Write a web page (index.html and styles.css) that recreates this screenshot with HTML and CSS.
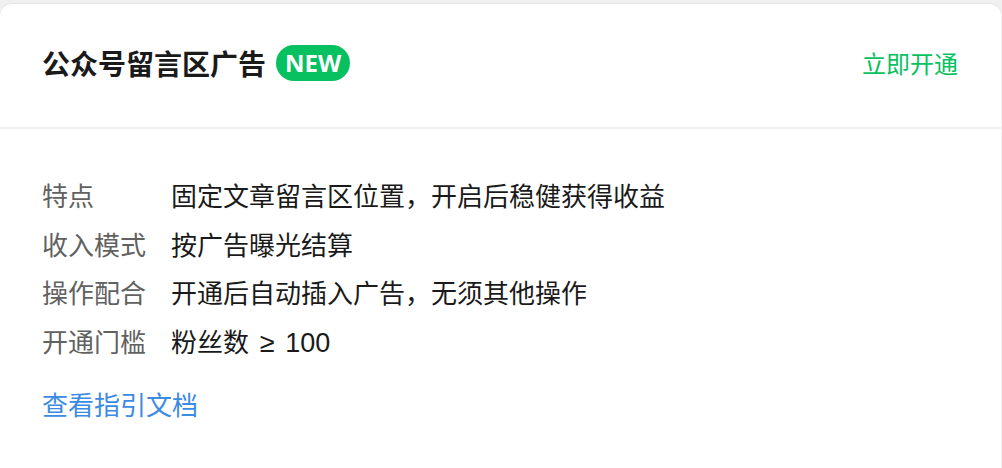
FILE: index.html
```html
<!DOCTYPE html>
<html lang="zh-CN">
<head>
<meta charset="utf-8">
<link rel="stylesheet" href="styles.css">
</head>
<body>
<div class="card">
  <div class="card-header">
    <div class="title-wrap">
      <span class="title">公众号留言区广告</span>
      <span class="badge">NEW</span>
    </div>
    <a class="action">立即开通</a>
  </div>
  <div class="card-body">
    <div class="info">
      <div class="label">特点</div><div class="value">固定文章留言区位置，开启后稳健获得收益</div>
      <div class="label">收入模式</div><div class="value">按广告曝光结算</div>
      <div class="label">操作配合</div><div class="value">开通后自动插入广告，无须其他操作</div>
      <div class="label">开通门槛</div><div class="value">粉丝数 <span class="latin">≥ 100</span></div>
    </div>
    <a class="doc-link">查看指引文档</a>
  </div>
</div>
</body>
</html>
```
FILE: styles.css
```css
html, body {
  margin: 0;
  padding: 0;
}
body {
  background: #f0f0f0;
  font-family: "Noto Sans CJK SC", "Noto Sans", sans-serif;
  height: 468px;
  overflow: hidden;
}
.card {
  margin-top: 4px;
  width: 1001px;
  height: 464px;
  background: #ffffff;
  border-radius: 12px 12px 0 0;
  box-shadow: 0 -1px 0 #e6e6e6;
}
.card-header {
  height: 125px;
  box-sizing: border-box;
  padding: 0 43px 0 42px;
  display: flex;
  align-items: center;
  justify-content: space-between;
  border-bottom: 2px solid #eeeeee;
}
.title-wrap {
  display: flex;
  align-items: center;
}
.title {
  font-size: 28px;
  font-weight: 700;
  color: #1a1a1a;
  line-height: 40px;
  margin-top: -6px;
}
.badge {
  margin-left: 10px;
  margin-top: -6px;
  height: 36px;
  padding: 0 9px;
  border-radius: 18px;
  background: #07c160;
  color: #ffffff;
  font-family: "Noto Sans", "Liberation Sans", sans-serif;
  font-weight: 700;
  font-size: 24px;
  line-height: 36px;
  display: inline-flex;
  align-items: center;
}
.action {
  color: #07c160;
  font-size: 24px;
  line-height: 34px;
  margin-top: -6px;
  cursor: pointer;
}
.card-body {
  padding: 42px 42px 0;
}
.info {
  display: grid;
  grid-template-columns: 129px auto;
  font-size: 26px;
  line-height: 48.5px;
}
.label {
  color: #616161;
}
.value {
  color: #1a1a1a;
}
.latin {
  font-family: "Liberation Sans", "Noto Sans", sans-serif;
  font-size: 27px;
  margin-left: 5px;
  word-spacing: 3px;
}
.doc-link {
  display: block;
  margin-top: 13px;
  font-size: 26px;
  line-height: 48px;
  color: #3b8ae3;
  cursor: pointer;
}
```
